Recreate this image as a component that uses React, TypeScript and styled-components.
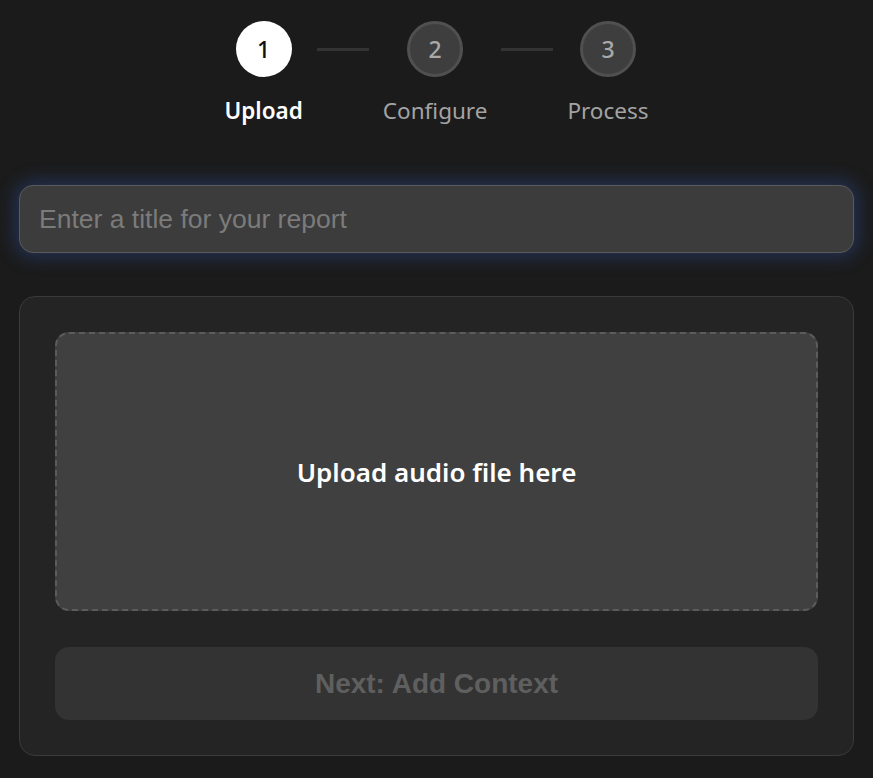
import React, { useState } from 'react'
import styled, { createGlobalStyle } from 'styled-components'

const steps = ['Upload', 'Configure', 'Process']

export default function App() {
  const [title, setTitle] = useState('')
  const active = 0

  return (
    <>
      <GlobalStyle />
      <Page>
        <Stepper>
          {steps.map((label, i) => (
            <React.Fragment key={label}>
              {i > 0 && <Connector />}
              <Step>
                <Circle $active={i === active}>{i + 1}</Circle>
                <StepLabel $active={i === active}>{label}</StepLabel>
              </Step>
            </React.Fragment>
          ))}
        </Stepper>

        <TitleInput
          value={title}
          onChange={e => setTitle(e.target.value)}
          placeholder="Enter a title for your report"
        />

        <Card>
          <DropZone>Upload audio file here</DropZone>
          <NextButton disabled>Next: Add Context</NextButton>
        </Card>
      </Page>
    </>
  )
}

const GlobalStyle = createGlobalStyle`
  html, body {
    margin: 0;
    padding: 0;
    background: #1b1b1b;
  }
  * {
    box-sizing: border-box;
  }
`

const Page = styled.div`
  min-height: 778px;
  padding: 21px 19px 21px;
  display: flex;
  flex-direction: column;
  font-family: 'Noto Sans', 'Open Sans', sans-serif;
`

const Stepper = styled.div`
  display: flex;
  justify-content: center;
  align-items: flex-start;
  gap: 14px;
`

const Step = styled.div`
  display: flex;
  flex-direction: column;
  align-items: center;
  gap: 19px;
`

const Circle = styled.div<{ $active: boolean }>`
  width: 56px;
  height: 56px;
  border-radius: 50%;
  display: flex;
  align-items: center;
  justify-content: center;
  font-size: 23px;
  font-weight: 500;
  background: ${p => (p.$active ? '#ffffff' : '#3e3e3e')};
  color: ${p => (p.$active ? '#111111' : '#a9a9a9')};
  border: ${p => (p.$active ? 'none' : '3px solid #505050')};
`

const StepLabel = styled.div<{ $active: boolean }>`
  font-size: 22.5px;
  line-height: 30px;
  font-weight: ${p => (p.$active ? 600 : 400)};
  color: ${p => (p.$active ? '#ffffff' : '#a3a3a3')};
`

const Connector = styled.div`
  width: 52px;
  height: 3px;
  margin-top: 27px;
  background: #333333;
`

const TitleInput = styled.input`
  margin-top: 59px;
  height: 68px;
  width: 100%;
  padding: 0 19px;
  border-radius: 14px;
  border: 1px solid #5a5a5a;
  background: #3c3c3c;
  color: #e0e0e0;
  font-family: 'Liberation Sans', Arial, sans-serif;
  font-size: 26.5px;
  outline: none;
  box-shadow: 0 0 18px 4px rgba(50, 90, 180, 0.38);

  &::placeholder {
    color: #7b7b7b;
  }
`

const Card = styled.div`
  margin-top: 43px;
  padding: 35px;
  border: 1px solid #3a3a3a;
  border-radius: 16px;
  background: #242424;
  display: flex;
  flex-direction: column;
  gap: 36px;
`

const DropZone = styled.div`
  height: 279px;
  border: 2px dashed #5c5c5c;
  border-radius: 14px;
  background: #404040;
  display: flex;
  align-items: center;
  justify-content: center;
  color: #ffffff;
  font-size: 26px;
  font-weight: 600;
  cursor: pointer;
`

const NextButton = styled.button`
  height: 73px;
  flex-shrink: 0;
  border: none;
  border-radius: 14px;
  background: #333333;
  color: #5f5f5f;
  font-family: 'Liberation Sans', Arial, sans-serif;
  font-size: 28px;
  font-weight: 700;
  cursor: not-allowed;
`
